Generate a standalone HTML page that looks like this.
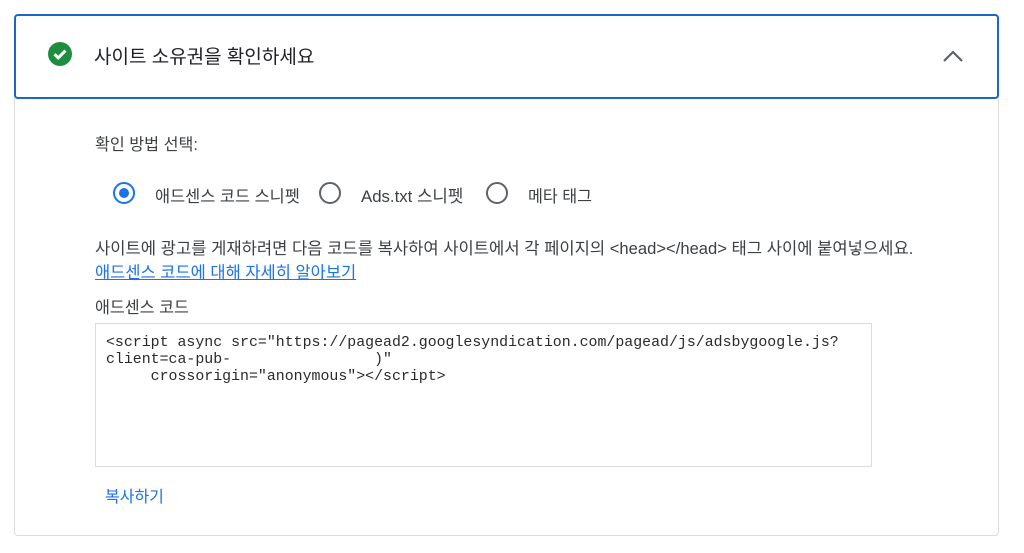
<!DOCTYPE html>
<html><head><meta charset="utf-8"><style>
body{margin:0;width:1024px;height:553px;background:#fff;font-family:"Liberation Sans","Noto Sans CJK KR",sans-serif;color:#202124;position:relative;overflow:hidden}
.card{position:absolute;left:14px;top:14px;width:985px;height:522px;border:1px solid #dadce0;border-radius:4px;box-sizing:border-box}
.head{position:absolute;left:14px;top:14px;width:985px;height:85px;border:2px solid #1a67c6;border-radius:4px;box-sizing:border-box;background:#fff}
.t{position:absolute;white-space:nowrap}
.radio{position:absolute;width:22px;height:22px;border:2px solid #5f6368;border-radius:50%;box-sizing:border-box}
.radio.on{border-color:#1a73e8}
.radio.on:after{content:"";position:absolute;left:4px;top:4px;width:10px;height:10px;border-radius:50%;background:#1a73e8}
.code{position:absolute;left:95px;top:323px;width:777px;height:144px;border:1px solid #dadce0;box-sizing:border-box;font-family:"Liberation Mono",monospace;font-size:14.9px;line-height:17px;padding:11px 0 0 10px;white-space:pre;color:#2a2a2a}
</style></head><body>
<div class="card"></div>
<div class="head">
<svg style="position:absolute;left:31px;top:25px" width="26" height="26" viewBox="0 0 26 26"><circle cx="13" cy="13" r="12" fill="#1e8e3e"/><path d="M7.5 13.2l3.7 3.7 7.3-7.3" stroke="#fff" stroke-width="3" fill="none"/></svg>
<div class="t" style="left:78px;top:26px;font-size:19px;color:#202124">사이트 소유권을 확인하세요</div>
<svg style="position:absolute;left:926px;top:33px" width="22" height="14" viewBox="0 0 22 14"><path d="M2 12L11 3l9 9" stroke="#5f6368" stroke-width="2.2" fill="none"/></svg>
</div>
<div class="t" style="left:95px;top:131px;font-size:16.2px;color:#3c4043">확인 방법 선택:</div>
<div class="radio on" style="left:113px;top:182px"></div>
<div class="t" style="left:155px;top:183px;font-size:16.4px;color:#3c4043">애드센스 코드 스니펫</div>
<div class="radio" style="left:319px;top:182px"></div>
<div class="t" style="left:361px;top:183px;font-size:16.8px;color:#3c4043">Ads.txt 스니펫</div>
<div class="radio" style="left:486px;top:182px"></div>
<div class="t" style="left:528px;top:183px;font-size:16.2px;color:#3c4043">메타 태그</div>
<div class="t" style="left:95px;top:235px;font-size:16.6px;color:#3c4043">사이트에 광고를 게재하려면 다음 코드를 복사하여 사이트에서 각 페이지의 &lt;head&gt;&lt;/head&gt; 태그 사이에 붙여넣으세요.</div>
<div class="t" style="left:95px;top:259px;font-size:16.5px;color:#1a73e8;text-decoration:underline">애드센스 코드에 대해 자세히 알아보기</div>
<div class="t" style="left:95px;top:294px;font-size:16.2px;color:#3c4043">애드센스 코드</div>
<div class="code">&lt;script async src="https://pagead2.googlesyndication.com/pagead/js/adsbygoogle.js?
client=ca-pub-                )"
     crossorigin="anonymous"&gt;&lt;/script&gt;</div>
<div class="t" style="left:105px;top:483px;font-size:16px;color:#1a73e8">복사하기</div>
</body></html>
